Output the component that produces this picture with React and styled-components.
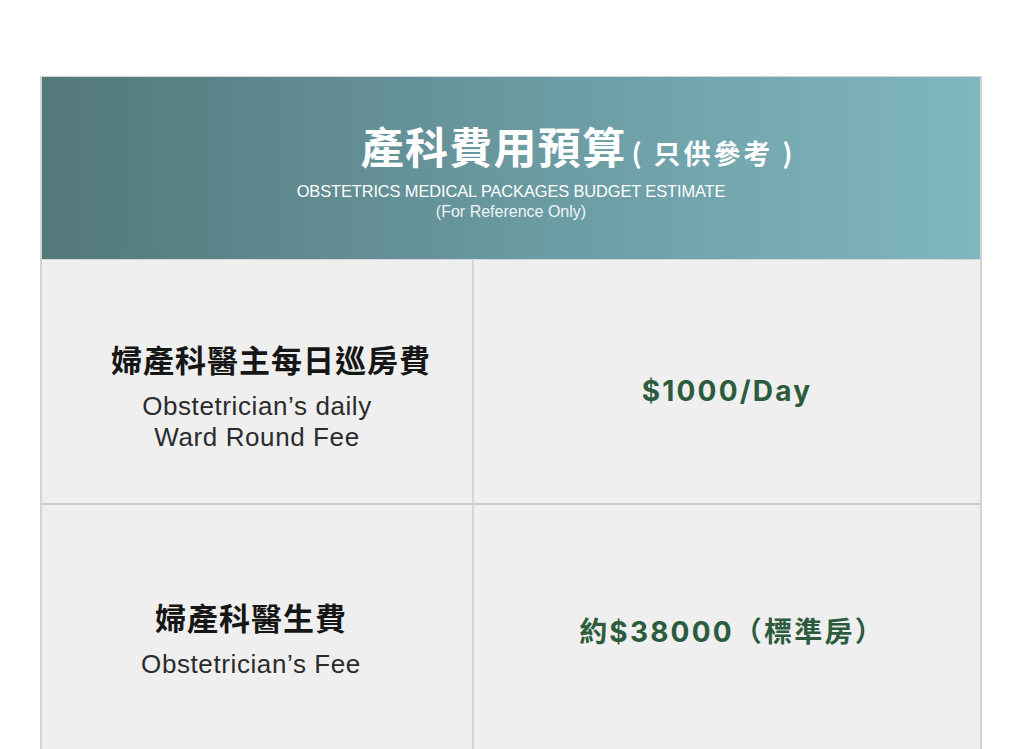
import React from "react";
import styled, { createGlobalStyle } from "styled-components";

const Global = createGlobalStyle`
  html, body { margin: 0; padding: 0; background: #ffffff; }
  body { font-family: "Liberation Sans", "Noto Sans CJK TC", sans-serif; }
`;

const Page = styled.div`
  padding: 76px 0 0 40px;
  width: 942px;
`;

const Table = styled.div`
  border-left: 2px solid #d3d3d3;
  border-right: 2px solid #d3d3d3;
  border-top: 1px solid #d6d6d6;
  background: #efefef;
`;

const Header = styled.div`
  height: 183px;
  box-sizing: border-box;
  padding-top: 42px;
  background: linear-gradient(90deg, #52787c 0%, #6a99a0 50%, #80b7bf 100%);
  color: #ffffff;
  display: flex;
  flex-direction: column;
  align-items: center;
  border-bottom: 1px solid #cfd8d8;
`;

const Title = styled.div`
  padding-left: 134px;
  display: flex;
  align-items: baseline;
  font-family: "Noto Sans CJK TC", sans-serif;
  font-weight: 700;
  line-height: 52px;
`;

const TitleMain = styled.span`
  font-size: 43px;
  letter-spacing: 1.3px;
`;

const TitleNote = styled.span`
  font-size: 27px;
  letter-spacing: 2.9px;
  margin-left: 5px;
`;

const Subtitle = styled.div`
  margin-top: 2px;
  font-family: "Liberation Sans", sans-serif;
  font-size: 16.4px;
  line-height: 20px;
  letter-spacing: -0.1px;
`;

const SubNote = styled.div`
  margin-top: 1px;
  font-family: "Liberation Sans", sans-serif;
  font-size: 16px;
  line-height: 20px;
  font-weight: 300;
  color: #eef6f7;
`;

const Row = styled.div`
  display: grid;
  grid-template-columns: 432px 1fr;
  height: ${(p) => p.h}px;
  border-bottom: 2px solid #cbcbcb;
`;

const LabelCell = styled.div`
  display: flex;
  flex-direction: column;
  align-items: center;
  justify-content: center;
  padding-top: ${(p) => p.pt}px;
  padding-right: ${(p) => p.pr || 0}px;
  box-sizing: border-box;
  border-right: 2px solid #d6d6d6;
  text-align: center;
`;

const ValueCell = styled.div`
  display: flex;
  align-items: center;
  justify-content: center;
  padding-top: ${(p) => p.pt || 0}px;
  padding-bottom: ${(p) => p.pb || 0}px;
  padding-left: ${(p) => p.pl || 0}px;
  box-sizing: border-box;
`;

const LabelZh = styled.div`
  font-family: "Noto Sans CJK TC", sans-serif;
  font-weight: 700;
  font-size: 31px;
  letter-spacing: 1px;
  line-height: 40px;
  color: #161616;
  padding-left: ${(p) => p.shift || 0}px;
  margin-bottom: ${(p) => p.gap}px;
`;

const LabelEn = styled.div`
  font-family: "Liberation Sans", sans-serif;
  font-size: 26px;
  letter-spacing: 0.6px;
  line-height: 31px;
  color: #2b2b2b;
`;

const Value = styled.div`
  font-family: "Inter", "Noto Sans CJK TC", sans-serif;
  font-weight: 700;
  font-size: 28px;
  letter-spacing: 2.2px;
  color: #2c5c3d;
`;

export default function App() {
  return (
    <>
      <Global />
      <Page>
        <Table>
          <Header>
            <Title>
              <TitleMain>產科費用預算</TitleMain>
              <TitleNote>( 只供參考 )</TitleNote>
            </Title>
            <Subtitle>OBSTETRICS MEDICAL PACKAGES BUDGET ESTIMATE</Subtitle>
            <SubNote>(For Reference Only)</SubNote>
          </Header>
          <Row h={243}>
            <LabelCell pt={28}>
              <LabelZh shift={28} gap={12}>婦產科醫主每日巡房費</LabelZh>
              <LabelEn>Obstetrician’s daily</LabelEn>
              <LabelEn>Ward Round Fee</LabelEn>
            </LabelCell>
            <ValueCell pt={18}>
              <Value>$1000/Day</Value>
            </ValueCell>
          </Row>
          <Row h={260}>
            <LabelCell pt={6} pr={12}>
              <LabelZh gap={12}>婦產科醫生費</LabelZh>
              <LabelEn>Obstetrician’s Fee</LabelEn>
            </LabelCell>
            <ValueCell pb={11} pl={10}>
              <Value>約$38000（標準房）</Value>
            </ValueCell>
          </Row>
        </Table>
      </Page>
    </>
  );
}
